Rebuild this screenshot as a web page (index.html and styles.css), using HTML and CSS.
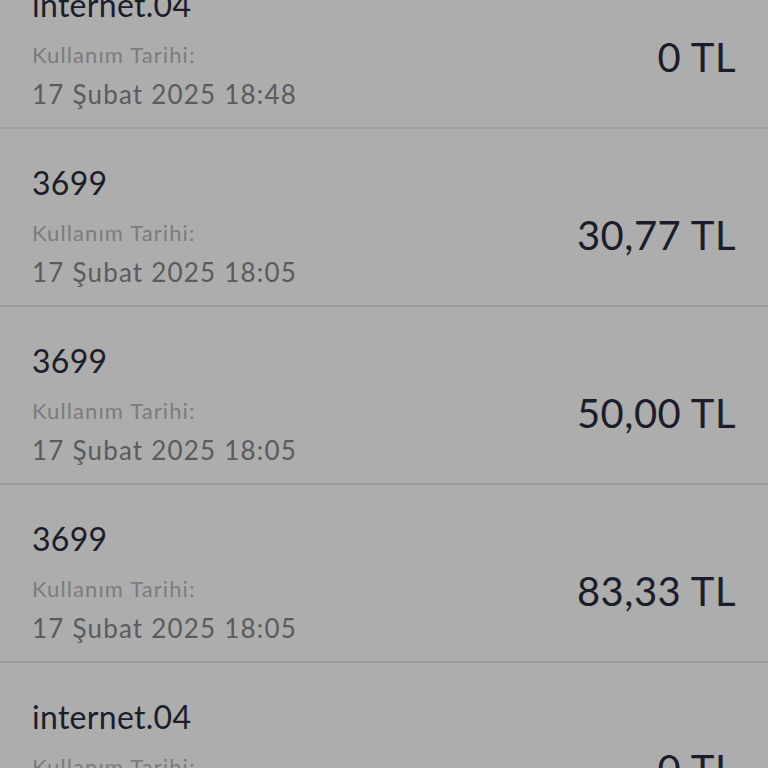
FILE: index.html
```html
<!DOCTYPE html>
<html lang="tr">
<head>
<meta charset="utf-8">
<link rel="stylesheet" href="styles.css">
</head>
<body>
<div class="list">
  <div class="row">
    <div class="info">
      <div class="title">internet.04</div>
      <div class="label">Kullanım Tarihi:</div>
      <div class="date">17 Şubat 2025 18:48</div>
    </div>
    <div class="amount">0 TL</div>
  </div>
  <div class="row">
    <div class="info">
      <div class="title">3699</div>
      <div class="label">Kullanım Tarihi:</div>
      <div class="date">17 Şubat 2025 18:05</div>
    </div>
    <div class="amount">30,77 TL</div>
  </div>
  <div class="row">
    <div class="info">
      <div class="title">3699</div>
      <div class="label">Kullanım Tarihi:</div>
      <div class="date">17 Şubat 2025 18:05</div>
    </div>
    <div class="amount">50,00 TL</div>
  </div>
  <div class="row">
    <div class="info">
      <div class="title">3699</div>
      <div class="label">Kullanım Tarihi:</div>
      <div class="date">17 Şubat 2025 18:05</div>
    </div>
    <div class="amount">83,33 TL</div>
  </div>
  <div class="row">
    <div class="info">
      <div class="title">internet.04</div>
      <div class="label">Kullanım Tarihi:</div>
      <div class="date">17 Şubat 2025 18:05</div>
    </div>
    <div class="amount">0 TL</div>
  </div>
</div>
</body>
</html>
```
FILE: styles.css
```css
html, body {
  margin: 0;
  padding: 0;
  background: #adadad;
  overflow: hidden;
  height: 768px;
}
body {
  font-family: Lato, "Noto Sans", sans-serif;
}
.list {
  display: flex;
  flex-direction: column;
  margin-top: -49px;
}
.row {
  display: flex;
  align-items: flex-start;
  justify-content: space-between;
  height: 176px;
  padding: 0 32px;
  border-bottom: 2px solid #9d9d9d;
  flex-shrink: 0;
}
.info {
  display: flex;
  flex-direction: column;
  padding-top: 34px;
}
.title {
  font-size: 32px;
  line-height: 40px;
  letter-spacing: 0.3px;
  color: #1b1d2a;
}
.label {
  margin-top: 15px;
  font-size: 22px;
  line-height: 30px;
  letter-spacing: 1.1px;
  color: #7c7c7e;
}
.date {
  margin-top: 7px;
  font-size: 26px;
  line-height: 34px;
  letter-spacing: 1.2px;
  color: #5b5b5e;
}
.amount {
  margin-top: 82px;
  font-size: 40px;
  line-height: 48px;
  letter-spacing: 0.5px;
  color: #1b1d2a;
}
```
